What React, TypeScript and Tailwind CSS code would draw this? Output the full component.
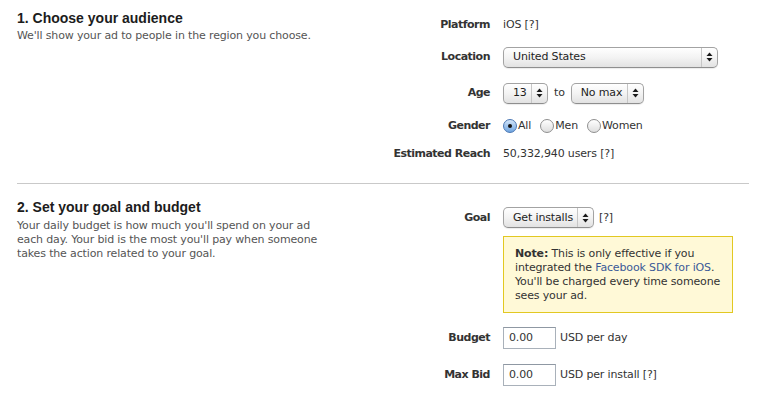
const Arrows = () => (
  <svg width="7" height="10" viewBox="0 0 7 10" className="block">
    <path d="M3.5 0.5 L6.5 4 L0.5 4 Z" fill="#1a1a1a" />
    <path d="M3.5 9.5 L6.5 6 L0.5 6 Z" fill="#1a1a1a" />
  </svg>
);

const Select = ({ label, width }: { label: string; width: string }) => (
  <div
    className={`${width} h-[21px] flex items-stretch rounded-[5px] border border-[#a3a3a3] border-b-[#8e8e8e] bg-gradient-to-b from-[#ffffff] via-[#f3f3f3] to-[#e2e2e2] shadow-[0_1px_1px_rgba(0,0,0,0.08)]`}
  >
    <div className="flex-1 flex items-center pl-[9px] text-[#1e1e1e] whitespace-nowrap">{label}</div>
    <div className="w-[16px] flex items-center justify-center border-l border-[#c6c6c6]">
      <Arrows />
    </div>
  </div>
);

const Radio = ({ label, checked }: { label: string; checked?: boolean }) => (
  <label className="flex items-center mr-[9px]">
    {checked ? (
      <span className="w-[14px] h-[14px] rounded-full border border-[#4a77b4] bg-gradient-to-b from-[#d4e6fa] to-[#6fa4df] flex items-center justify-center">
        <span className="w-[4px] h-[4px] rounded-full bg-[#111]" />
      </span>
    ) : (
      <span className="w-[14px] h-[14px] rounded-full border border-[#8f8f8f] bg-gradient-to-b from-[#ffffff] to-[#dedede]" />
    )}
    <span className="ml-[1px]">{label}</span>
  </label>
);

const Row = ({ label, className, children }: { label: string; className: string; children: React.ReactNode }) => (
  <div className={`flex items-center ${className}`}>
    <div className="w-[110px] text-right font-bold tracking-[-0.5px] text-[#333] whitespace-nowrap">{label}</div>
    <div className="ml-[13px] flex items-center">{children}</div>
  </div>
);

const Input = () => (
  <div className="w-[53px] h-[22px] border border-[#a9b1ba] border-t-[#8f98a3] bg-white flex items-center pl-[5px] text-[#333]">
    0.00
  </div>
);

export default function App() {
  return (
    <div className="w-[766px] h-[399px] bg-white px-[17px] text-[11px] leading-[14px] tracking-[-0.15px] text-[#333] font-['DejaVu_Sans',sans-serif] overflow-hidden">
      <section className="flex">
        <div className="w-[363px] pt-[10px]">
          <h2 className="text-[14px] leading-[17px] tracking-normal font-bold text-[#1c1c1c] font-['Liberation_Sans',Arial,sans-serif]">
            1. Choose your audience
          </h2>
          <p className="mt-[2px] text-[#555]">We'll show your ad to people in the region you choose.</p>
        </div>
        <div className="pt-[15px]">
          <Row label="Platform" className="h-[20px]">
            <span>iOS [?]</span>
          </Row>
          <Row label="Location" className="h-[22px] mt-[11px]">
            <Select label="United States" width="w-[215px]" />
          </Row>
          <Row label="Age" className="h-[22px] mt-[14px]">
            <Select label="13" width="w-[45px]" />
            <span className="ml-[6px] mr-[6px]">to</span>
            <Select label="No max" width="w-[73px]" />
          </Row>
          <Row label="Gender" className="h-[20px] mt-[12px]">
            <Radio label="All" checked />
            <Radio label="Men" />
            <Radio label="Women" />
          </Row>
          <Row label="Estimated Reach" className="h-[20px] mt-[8px]">
            <span>50,332,940 users [?]</span>
          </Row>
        </div>
      </section>

      <div className="mt-[19px] h-px bg-[#c9c9c9]" />

      <section className="flex">
        <div className="w-[363px] pt-[15px]">
          <h2 className="text-[14px] leading-[17px] tracking-normal font-bold text-[#1c1c1c] font-['Liberation_Sans',Arial,sans-serif]">
            2. Set your goal and budget
          </h2>
          <p className="mt-[3px] text-[#555]">
            Your daily budget is how much you'll spend on your ad
            <br />
            each day. Your bid is the most you'll pay when someone
            <br />
            takes the action related to your goal.
          </p>
        </div>
        <div className="pt-[23px]">
          <Row label="Goal" className="h-[21px]">
            <Select label="Get installs" width="w-[91px]" />
            <span className="ml-[5px]">[?]</span>
          </Row>
          <div className="ml-[123px] mt-[8px] w-[230px] border border-[#e2c822] bg-[#fff9d7] px-[11px] pt-[10px] pb-[9px] text-[#333] whitespace-nowrap">
            <p>
              <b>Note:</b> This is only effective if you
            </p>
            <p>
              integrated the <span className="text-[#3b5998]">Facebook SDK for iOS</span>.
            </p>
            <p>You'll be charged every time someone</p>
            <p>sees your ad.</p>
          </div>
          <Row label="Budget" className="h-[22px] mt-[14px]">
            <Input />
            <span className="ml-[4px]">USD per day</span>
          </Row>
          <Row label="Max Bid" className="h-[22px] mt-[15px]">
            <Input />
            <span className="ml-[4px]">USD per install [?]</span>
          </Row>
        </div>
      </section>
    </div>
  );
}
